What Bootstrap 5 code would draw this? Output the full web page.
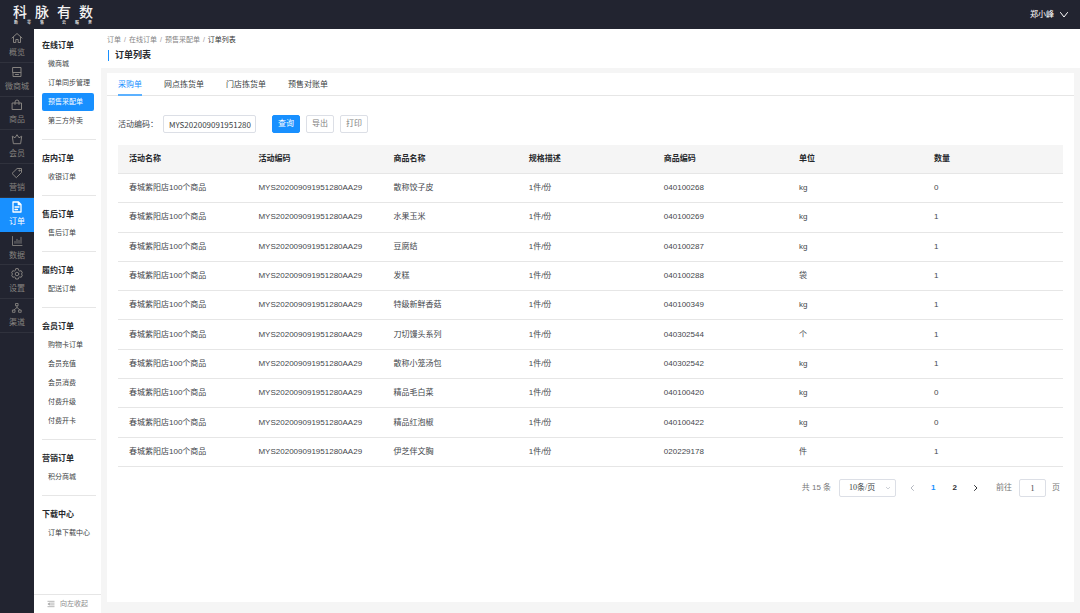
<!DOCTYPE html>
<html lang="zh-CN">
<head>
<meta charset="utf-8">
<meta name="viewport" content="width=device-width, initial-scale=1">
<title>订单列表</title>
<link href="https://cdn.jsdelivr.net/npm/bootstrap@5.3.0/dist/css/bootstrap.min.css" rel="stylesheet">
<style>
:root{--brand:#1890ff;--ink:#222430;--line:#e6e6e6}
body{font-family:"Liberation Sans","Noto Sans CJK SC",sans-serif;font-size:8px;line-height:12px;color:#44474c;background:#f5f5f5}
a{color:inherit;text-decoration:none}
svg{fill:none;stroke:currentColor;stroke-linecap:round;stroke-linejoin:round;display:block}
.topbar{background:var(--ink);color:#fff;height:29px;padding:0 12px 0 13px}
.brand-name{font-size:14px;font-weight:500;line-height:16px;color:#f4f4f4;gap:8px}
.brand-sub{font-size:4px;font-weight:700;line-height:5px;color:#ddd;padding:0 1px}
.user-btn{font-size:8px;line-height:12px;color:#fff;gap:6px}
.rail{width:34px;background:var(--ink);color:#85827f}
.rail-list{height:304px}
.rail-list a{border-bottom:1px solid #30323d;gap:3px}
.rail-list a.active{background:var(--brand);color:#fff;border-color:var(--brand)}
.side{width:67px;background:#fff}
.side-group{margin:0 5px 0 8px;padding:9px 0 8px;border-bottom:1px solid var(--line)}
.side-group:first-child{padding-top:7px}
.side-group:last-child{border-bottom:0}
.side-group h2{font-size:8px;line-height:19px;margin:0;font-weight:700;color:#26282c}
.side-group a{font-size:7px;line-height:18px;margin:0 2px 1px 0;padding-left:6px;border-radius:2px;color:#3c3f44;white-space:nowrap}
.side-group a.active{background:var(--brand);color:#fff}
.fold{border:0;border-top:1px solid var(--line);background:#fff;color:#8c8c8c;font-size:7px;line-height:18px;gap:5px;padding:0 13px}
.page-head{background:#fff;padding:5px 6px;height:39px}
.breadcrumb{font-size:7px;line-height:12px;margin:0 0 4px;--bs-breadcrumb-item-padding-x:3px;--bs-breadcrumb-divider-color:#999;color:#858585}
.breadcrumb .active{color:#333}
.page-title{font-size:9px;line-height:11px;font-weight:700;color:#26282c;margin:0 0 0 1px;padding-left:6px;border-left:1px solid var(--brand)}
.panel{background:#fff;margin:5px 6px 11px}
.order-tabs{border-bottom:1px solid var(--line);padding:0 11px;gap:22px;--bs-nav-link-padding-x:0}
.order-tabs .nav-link{color:#3c3f44;line-height:12px;padding-top:6px;padding-bottom:3px;border-bottom:2px solid transparent;margin-bottom:-1px;transition:none}
.order-tabs .nav-link.active{color:var(--brand);border-bottom-color:#5cb1ff}
.panel-body{padding:19px 11px 0}
.query-form>label{line-height:14px;padding-top:2px;margin-right:5px}
.field{border:1px solid #dcdfe6;border-radius:2px;height:18px;font-size:8px;line-height:16px;padding:0 5px;color:#3c3f44;background:#fff}
.code-field{width:93px;padding-right:0;font-family:"Noto Sans CJK SC",sans-serif}
.act-group{gap:6px}
.act{--bs-btn-font-size:8px;--bs-btn-line-height:16px;--bs-btn-padding-x:5px;--bs-btn-padding-y:0px;--bs-btn-border-radius:2px;width:28px}
.act-plain{--bs-btn-color:#808080;--bs-btn-border-color:#dcdfe6;background:#fff}
.act-main{--bs-btn-bg:var(--brand);--bs-btn-border-color:var(--brand)}
.orders{height:322px;table-layout:fixed;margin:12px 0 0;--bs-table-color:#44474c;--bs-table-bg:#fff}
.orders>:not(caption)>*>*{padding:8px 0 8px 11px;line-height:12px;vertical-align:middle;border-bottom:1px solid var(--line);white-space:nowrap}
.orders thead th{background:#f5f5f5;color:#26282c;font-weight:700}
.pager{margin-top:12px;color:#777;padding-right:3px}
.pager a{line-height:18px;font-weight:700;color:#303236}
.page-links{gap:17px;margin:0 18px 0 14px}
.page-links a.current{color:var(--brand)}
.page-links a.off{color:#b4b8c0}
.size-field{width:57px;appearance:none;padding:0 9px;font-family:"Liberation Serif","Noto Sans CJK SC",serif;background:#fff url("data:image/svg+xml,%3Csvg xmlns='http://www.w3.org/2000/svg' viewBox='0 0 6 4'%3E%3Cpath d='M1 1l2 2 2-2' fill='none' stroke='%23b8bcc4' stroke-width='.7'/%3E%3C/svg%3E") no-repeat right 4px center/6px 4px}
.goto-field{width:27px;text-align:center;font-family:"Liberation Serif",serif;margin:0 6px 0 7px}
</style>
</head>
<body class="d-flex flex-column min-vh-100">
<header class="topbar d-flex justify-content-between align-items-center">
  <a href="#" class="d-block">
    <span class="brand-name d-flex"><span>科</span><span>脉</span><span>有</span><span>数</span></span>
    <span class="brand-sub d-flex justify-content-between"><span>新</span><span>零</span><span>售</span><span></span><span>云</span><span>服</span><span>务</span></span>
  </a>
  <button type="button" class="user-btn btn p-0 border-0 d-flex align-items-center">郑小峰
    <svg width="8" height="6" viewBox="0 0 8 6"><path d="M.5.5 4 5 7.500.5"/></svg></button>
</header>
<div class="d-flex flex-grow-1">
  <nav class="rail flex-shrink-0" aria-label="主菜单">
    <div class="rail-list d-flex flex-column" id="rail"></div>
  </nav>
  <aside class="side flex-shrink-0 d-flex flex-column">
    <nav class="flex-grow-1" id="side" aria-label="订单菜单"></nav>
    <button type="button" class="fold d-flex align-items-center"><svg width="9" height="8" viewBox="0 0 9 8" stroke-width=".7"><path d="M1 1h7M4 3h4M4 5h4M1 7h7M2.500 3 1 4l1.500 1z"/></svg><span class="text-nowrap">向左收起</span></button>
  </aside>
  <main class="flex-grow-1 d-flex flex-column overflow-hidden">
    <div class="page-head">
      <ol class="breadcrumb">
        <li class="breadcrumb-item"><a href="#">订单</a></li><li class="breadcrumb-item"><a href="#">在线订单</a></li><li class="breadcrumb-item"><a href="#">预售采配单</a></li><li class="breadcrumb-item active">订单列表</li>
      </ol>
      <h1 class="page-title">订单列表</h1>
    </div>
    <section class="panel flex-grow-1">
      <nav class="nav order-tabs"><a class="nav-link active" href="#">采购单</a><a class="nav-link" href="#">网点拣货单</a><a class="nav-link" href="#">门店拣货单</a><a class="nav-link" href="#">预售对账单</a></nav>
      <div class="panel-body">
        <form class="query-form d-flex align-items-center">
          <label for="code">活动编码：</label>
          <input id="code" class="field code-field me-3" value="MYS202009091951280">
          <div class="act-group d-flex"><button type="button" class="btn btn-primary act act-main">查询</button>
          <button type="button" class="btn act act-plain">导出</button>
          <button type="button" class="btn act act-plain">打印</button></div>
        </form>
        <table class="table orders">
          <colgroup><col style="width:13.7%"><col style="width:14.3%"><col style="width:14.3%"><col style="width:14.3%"><col style="width:14.3%"><col style="width:14.3%"><col></colgroup>
          <thead><tr><th>活动名称</th><th>活动编码</th><th>商品名称</th><th>规格描述</th><th>商品编码</th><th>单位</th><th>数量</th></tr></thead>
          <tbody id="rows"></tbody>
        </table>
        <div class="pager d-flex justify-content-end align-items-center">
          <span class="me-2">共 15 条</span>
          <select class="field size-field" aria-label="每页条数"><option>10条/页</option></select>
          <div class="page-links d-flex align-items-center">
            <a class="off" href="#" aria-label="上一页"><svg width="4" height="6" viewBox="0 0 4 6"><path d="M3.500.5 1 3l2.500 2.500"/></svg></a>
            <a class="current" href="#">1</a><a href="#">2</a>
            <a href="#" aria-label="下一页"><svg width="4" height="6" viewBox="0 0 4 6"><path d="M.5.5 3 3 .5 5.500"/></svg></a>
          </div>
          <label for="goto">前往</label><input id="goto" class="field goto-field" value="1"><span>页</span>
        </div>
      </div>
    </section>
  </main>
</div>
<script>
const rail = [
  ['概览', '<path d="M1 6 6 1.500 11 6M2.500 5v5.500h2.300V7.500h2.400v3h2.300V5"/>'],
  ['微商城', '<path d="M2 1.500h8v5H2zM2 6.500v4h8v-4M4.500 8.500h3"/>'],
  ['商品', '<path d="M1.500 4h9v6.500h-9zM4 5.500V3a2 2 0 0 1 4 0v2.500"/>'],
  ['会员', '<path d="M2.300 10.300 1.300 3.200 4 4.800 6 1.700l2 3.100 2.700-1.600-1 7.100z"/>'],
  ['营销', '<path d="M6.500 1.500 10.500 1.500 10.500 5.500 5.300 10.700 1.300 6.700z"/><circle cx="8.400" cy="3.600" r=".6"/>'],
  ['订单', '<path d="M2 1h5.500L10 3.500V11H2zM7.300 1v2.700H10M4 6h4M4 8.500h2.500" stroke-width="1.300"/>'],
  ['数据', '<path d="M1.500 1.500v9h9.500M4 8.300v-2M6 8.300v-4M8 8.300V5.500M10 8.300v-6" stroke-width=".9"/>'],
  ['设置', '<path d="m4.700 1-.4 1.500-1 .6-1.500-.4L.6 4.900 1.700 6 .6 7.100l1.200 2.200 1.500-.4 1 .6.4 1.500h2.600l.4-1.500 1-.6 1.500.4 1.200-2.200L10.300 6l1.100-1.100-1.200-2.200-1.500.4-1-.6L7.300 1z"/><circle cx="6" cy="6" r="1.800"/>'],
  ['渠道', '<path d="M4.900 1.500h2.200v2.300H4.900zM1.800 8h2.200v2.300H1.800zM8 8h2.200v2.300H8zM6 3.800v1.700M2.900 8 6 5.500 9.100 8" stroke-width=".9"/>']
];
document.getElementById('rail').innerHTML = rail.map(([t, i]) => `<a href="#" class="flex-fill d-flex flex-column align-items-center justify-content-center ${t == '订单' ? 'active' : ''}"><svg width="12" height="12" viewBox="0 0 12 12">${i}</svg><span>${t}</span></a>`).join('');

const groups = [
  ['在线订单', '微商城', '订单同步管理', '预售采配单', '第三方外卖'],
  ['店内订单', '收银订单'],
  ['售后订单', '售后订单'],
  ['履约订单', '配送订单'],
  ['会员订单', '购物卡订单', '会员充值', '会员消费', '付费升级', '付费开卡'],
  ['营销订单', '积分商城'],
  ['下载中心', '订单下载中心']
];
document.getElementById('side').innerHTML = groups.map(([h, ...items]) => `<div class="side-group d-flex flex-column"><h2>${h}</h2>${items.map(t => `<a href="#" class="${t == '预售采配单' ? 'active' : ''}">${t}</a>`).join('')}</div>`).join('');

const orders = [
  ['散称饺子皮', '040100268', 'kg', 0],
  ['水果玉米', '040100269', 'kg', 1],
  ['豆腐结', '040100287', 'kg', 1],
  ['发糕', '040100288', '袋', 1],
  ['特级新鲜香菇', '040100349', 'kg', 1],
  ['刀切馒头系列', '040302544', '个', 1],
  ['散称小笼汤包', '040302542', 'kg', 1],
  ['精品毛白菜', '040100420', 'kg', 0],
  ['精品红泡椒', '040100422', 'kg', 0],
  ['伊芝伴文胸', '020229178', '件', 1]
];
document.getElementById('rows').innerHTML = orders.map(r => `<tr><td>春城紫阳店100个商品</td><td>MYS202009091951280AA29</td><td>${r[0]}</td><td>1件/份</td><td>${r[1]}</td><td>${r[2]}</td><td>${r[3]}</td></tr>`).join('');
</script>
<script src="https://cdn.jsdelivr.net/npm/bootstrap@5.3.0/dist/js/bootstrap.bundle.min.js"></script>
</body>
</html>
